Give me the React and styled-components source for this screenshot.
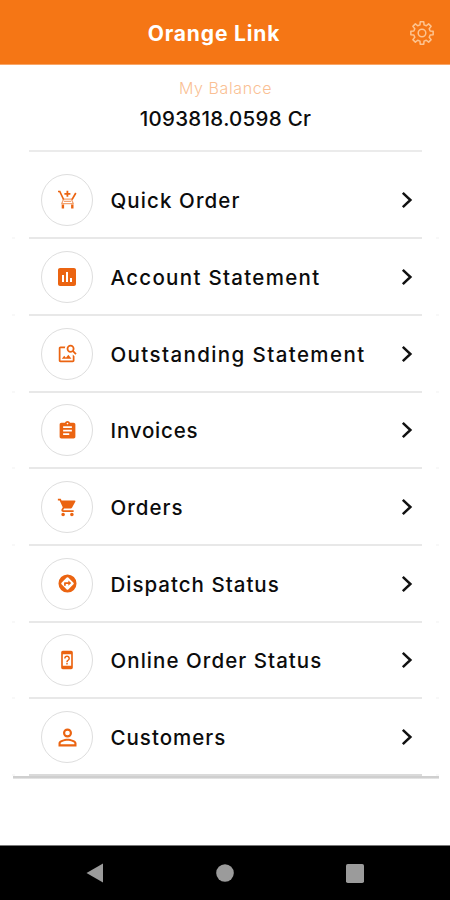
import styled, { createGlobalStyle } from "styled-components";
import {
	MdAssessment,
	MdAssignment,
	MdDeviceUnknown,
	MdOutlineImageSearch,
	MdPersonOutline,
	MdShoppingCart,
} from "react-icons/md";

const GlobalStyle = createGlobalStyle`
	* {
		box-sizing: border-box;
	}
	body {
		margin: 0;
		background: #fff;
		color: #0c0c0c;
		font-family: Inter, "Open Sans", sans-serif;
	}
`;

const Screen = styled.div`
	display: flex;
	flex-direction: column;
	height: 900px;
	background: #fff;
`;

const Header = styled.header`
	display: grid;
	grid-template-columns: 34px 1fr 56px;
	align-items: center;
	height: 65px;
	padding-top: 2px;
	background: #f57615;
	border-bottom: 1px solid #f9a667;
`;

const Title = styled.h1`
	grid-column: 2;
	margin: 0;
	padding-top: 1px;
	color: #fff;
	font-size: 21px;
	font-weight: 700;
	line-height: 28px;
	letter-spacing: ${(p) => p.$spacing}px;
	text-align: center;
`;

const SettingsButton = styled.button`
	display: flex;
	padding: 0 0 1px 15px;
	border: 0;
	background: none;
	color: #fdc491;
`;

const Balance = styled.section`
	display: flex;
	flex-direction: column;
	align-items: center;
	height: 87px;
	margin: 0 28px 0 29px;
	padding-top: 13px;
	border-bottom: 2px solid #ebebeb;
`;

const BalanceLabel = styled.div`
	color: #fabf94;
	font-size: 16px;
	font-weight: 300;
	line-height: 20px;
	letter-spacing: ${(p) => p.$spacing}px;
`;

const BalanceValue = styled.div`
	margin-top: 6px;
	font-size: 20.5px;
	font-weight: 450;
	line-height: 30px;
	letter-spacing: ${(p) => p.$spacing}px;
`;

const Menu = styled.nav`
	flex: 1;
	margin: 10.5px 11px 0 12px;
`;

const MenuItem = styled.a`
	display: flex;
	align-items: center;
	height: 74.7px;
	padding: 1px 26px 0 29px;
`;

const IconCircle = styled.span`
	display: flex;
	align-items: center;
	justify-content: center;
	width: 52px;
	height: 52px;
	border: 1px solid #dedede;
	border-radius: 50%;
	color: #eb6411;
`;

const Label = styled.span`
	flex: 1;
	margin-left: 17.5px;
	padding-top: 2px;
	font-size: 20.5px;
	font-weight: 450;
	line-height: 28px;
	letter-spacing: ${(p) => p.$spacing}px;
	white-space: nowrap;
`;

const Divider = styled.div`
	display: flex;
	justify-content: space-between;
	height: 2px;
`;

const Line = styled.span`
	width: 393px;
	background: ${(p) => (p.$last ? "#dadada" : "#e8e8e8")};
`;

const Tick = styled.span`
	width: 3px;
	background: #f8f8f8;
`;

const CardEdge = styled.div`
	height: 3px;
	margin-left: 1px;
	background: linear-gradient(#cfcfcf 60%, #f0f0f0);
`;

const NavBar = styled.footer`
	display: grid;
	grid-template-columns: repeat(3, 130px);
	justify-content: center;
	align-items: center;
	height: 55px;
	border-top: 1px solid #777;
	background: #000;
`;

const NavButton = styled.button`
	display: flex;
	justify-content: center;
	padding: 0;
	border: 0;
	background: none;
	color: #9b9b9b;
`;

function QuickOrderIcon({ size }) {
	return (
		<svg width={size} height={size} viewBox="0 0 24 24" fill="none" stroke="currentColor">
			<path d="M3 3.5H4.8L8.6 11.5M20.8 5L17 11.7" strokeWidth="1.7" />
			<path d="M12.4 2.8V8.8M9.4 5.8H15.4" strokeWidth="1.8" />
			<path d="M8.5 11.2H16.5L18.2 15.6H6.8ZM9 13.4H16" strokeWidth="1.3" opacity="0.6" />
			<path d="M7.9 16.5V20.6M17.3 16.5V20.6" strokeWidth="2.4" />
		</svg>
	);
}

function DispatchIcon({ size }) {
	return (
		<svg width={size} height={size} viewBox="0 0 20 20" fill="currentColor">
			<path
				fillRule="evenodd"
				d="M10 0.5A9.5 9.5 0 1 0 10 19.5A9.5 9.5 0 1 0 10 0.5ZM9.2 3.7Q10 3 10.8 3.7L16.3 9.2Q17 10 16.3 10.8L10.8 16.3Q10 17 9.2 16.3L3.7 10.8Q3 10 3.7 9.2Z"
			/>
			<path d="M6.4 12.3V9.2Q6.4 8.7 6.9 8.7H10.9V6.8L13.9 9.6L10.9 12.3V10.4H8.2V12.3Z" />
		</svg>
	);
}

const items = [
	{ label: "Quick Order", icon: QuickOrderIcon, size: 24, spacing: 1.1 },
	{ label: "Account Statement", icon: MdAssessment, size: 24, spacing: 1.3 },
	{ label: "Outstanding Statement", icon: MdOutlineImageSearch, size: 21, spacing: 1.4 },
	{ label: "Invoices", icon: MdAssignment, size: 21, spacing: 0.8 },
	{ label: "Orders", icon: MdShoppingCart, size: 21, spacing: 1 },
	{ label: "Dispatch Status", icon: DispatchIcon, size: 19, spacing: 1 },
	{ label: "Online Order Status", icon: MdDeviceUnknown, size: 20, spacing: 1.05 },
	{ label: "Customers", icon: MdPersonOutline, size: 27, spacing: 1 },
];

// eight rounded teeth around a small hub
function gearPath() {
	const points = [];
	for (let i = 0; i < 8; i++) {
		[
			[-14, 8.4],
			[-9, 11.3],
			[9, 11.3],
			[14, 8.4],
		].forEach(([offset, radius]) => {
			const angle = ((i * 45 + offset) * Math.PI) / 180;
			points.push(`${(13 + radius * Math.cos(angle)).toFixed(2)} ${(13 + radius * Math.sin(angle)).toFixed(2)}`);
		});
	}
	return `M${points.join("L")}Z`;
}

function GearIcon() {
	return (
		<svg width="26" height="26" viewBox="0 0 26 26" fill="none" stroke="currentColor" strokeWidth="1.5" strokeLinejoin="round">
			<path d={gearPath()} />
			<circle cx="13" cy="13" r="3.8" />
		</svg>
	);
}

function Chevron() {
	return (
		<svg width="12" height="18" viewBox="0 0 12 18" fill="none" stroke="#111" strokeWidth="2.5">
			<path d="M1.8 1.8L9.4 9L1.8 16.2" />
		</svg>
	);
}

export default function App() {
	return (
		<>
			<GlobalStyle />
			<Screen>
				<Header>
					<Title $spacing={0.85}>Orange Link</Title>
					<SettingsButton aria-label="Settings">
						<GearIcon />
					</SettingsButton>
				</Header>
				<Balance>
					<BalanceLabel $spacing={0.6}>My Balance</BalanceLabel>
					<BalanceValue $spacing={0.3}>1093818.0598 Cr</BalanceValue>
				</Balance>
				<Menu>
					{items.map(({ label, icon: Icon, size, spacing }, index) => (
						<div key={label}>
							<MenuItem>
								<IconCircle>
									<Icon size={size} />
								</IconCircle>
								<Label $spacing={spacing}>{label}</Label>
								<Chevron />
							</MenuItem>
							<Divider>
								<Tick />
								<Line $last={index === items.length - 1} />
								<Tick />
							</Divider>
						</div>
					))}
					<CardEdge />
				</Menu>
				<NavBar>
					<NavButton aria-label="Back">
						<svg width="18" height="20" viewBox="0 0 18 20" fill="currentColor">
							<path d="M0.5 10L17 0.5V19.5Z" />
						</svg>
					</NavButton>
					<NavButton aria-label="Home">
						<svg width="18" height="18" viewBox="0 0 18 18" fill="currentColor">
							<circle cx="9" cy="9" r="8.8" />
						</svg>
					</NavButton>
					<NavButton aria-label="Recent apps">
						<svg width="18" height="19" viewBox="0 0 18 19" fill="currentColor">
							<rect width="18" height="19" rx="1.8" />
						</svg>
					</NavButton>
				</NavBar>
			</Screen>
		</>
	);
}
